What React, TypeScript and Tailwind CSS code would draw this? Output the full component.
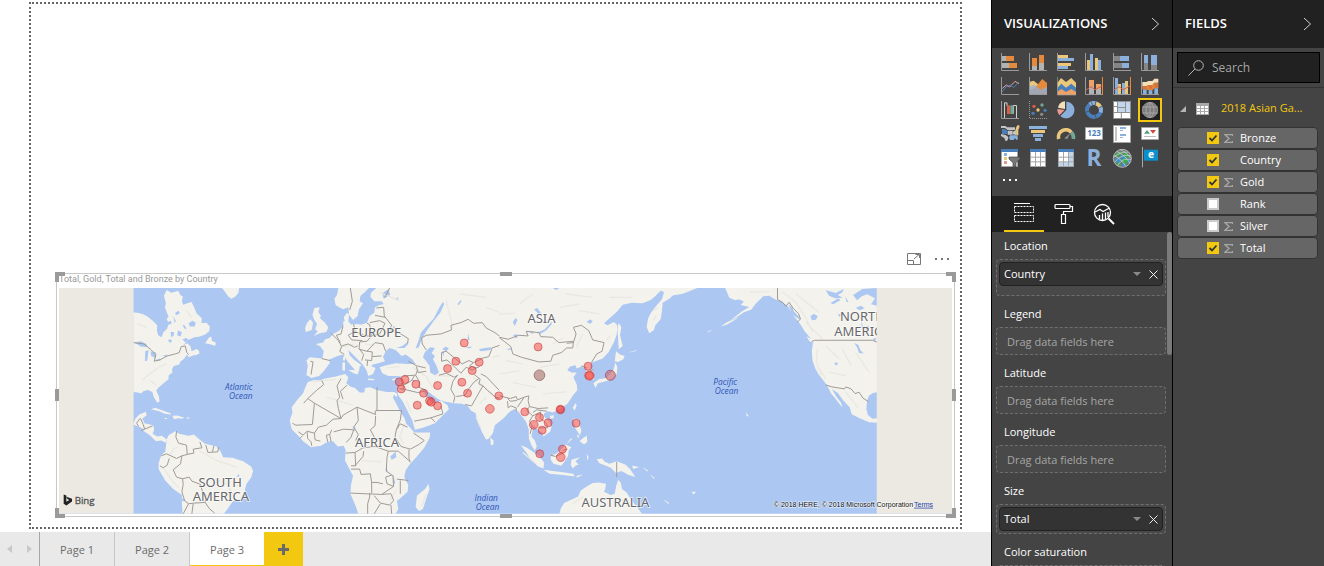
import { useState, type ReactNode } from "react"
import clsx from "clsx"

const ORANGE = "#e58a3c"
const BLUE = "#8cb0dc"
const DEEP = "#4a7ebb"
const SAND = "#ebc77c"
const GRAY = "#b3b3b3"

const Axis = () => (
  <path d="M1.5 0V52.5H54" fill="none" stroke="#9a9a9a" strokeWidth="3" />
)

const visuals: { name: string; icon: ReactNode }[] = [
  {
    name: "Stacked bar chart",
    icon: (
      <>
        <path d="M3 9h12v15H3zM3 30h21v15H3z" fill={GRAY} />
        <path d="M15 9h24v15H15zM24 30h24v15H24z" fill={ORANGE} />
        <Axis />
      </>
    ),
  },
  {
    name: "Stacked column chart",
    icon: (
      <>
        <path d="M9 39h15v12H9zM30 30h15v21H30z" fill={GRAY} />
        <path d="M9 15h15v24H9zM30 6h15v24H30z" fill={ORANGE} />
        <Axis />
      </>
    ),
  },
  {
    name: "Clustered bar chart",
    icon: (
      <>
        <path d="M3 6h30v9H3zM3 30h39v9H3z" fill={SAND} />
        <path d="M3 15h48v9H3zM3 39h30v9H3z" fill={BLUE} />
        <Axis />
      </>
    ),
  },
  {
    name: "Clustered column chart",
    icon: (
      <>
        <path d="M6 21h9v30H6zM30 15h9v36h-9z" fill={SAND} />
        <path d="M15 3h9v48h-9zM39 21h9v30h-9z" fill={BLUE} />
        <Axis />
      </>
    ),
  },
  {
    name: "100% stacked bar chart",
    icon: (
      <>
        <path d="M3 9h18v15H3zM3 30h24v15H3z" fill="#858585" />
        <path d="M21 9h27v15H21zM27 30h21v15H27z" fill={BLUE} />
        <Axis />
      </>
    ),
  },
  {
    name: "100% stacked column chart",
    icon: (
      <>
        <path d="M9 30h12v21H9zM30 36h18v15H30z" fill="#858585" />
        <path d="M9 6h12v24H9zM30 6h18v30H30z" fill={BLUE} />
        <Axis />
      </>
    ),
  },
  {
    name: "Line chart",
    icon: (
      <>
        <path d="M4 34L16 24L26 30L42 13L54 20" fill="none" stroke="#e2a29a" strokeWidth="3" />
        <path d="M2 46L15 30L28 24L38 32L53 16" fill="none" stroke={DEEP} strokeWidth="3" />
        <Axis />
      </>
    ),
  },
  {
    name: "Area chart",
    icon: (
      <>
        <path d="M3 14L14 11L30 24L42 26L54 16V51H3z" fill={SAND} />
        <path d="M3 40L18 32L40 6L54 19V51H3z" fill={ORANGE} />
        <path d="M3 28L17 24L34 38L54 30V51H3z" fill={BLUE} opacity=".75" />
        <Axis />
      </>
    ),
  },
  {
    name: "Stacked area chart",
    icon: (
      <>
        <path d="M1 18L12 3L27 15L43 3L57 17V34H1z" fill={SAND} />
        <path d="M1 33L13 20L27 32L43 20L57 32V46H1z" fill={DEEP} />
        <path d="M1 44L13 36L27 45L43 36L57 45V54H1z" fill="#eda368" />
        <path d="M1.5 0V54H57" fill="none" stroke="#9a9a9a" strokeWidth="2" />
      </>
    ),
  },
  {
    name: "Line and stacked column chart",
    icon: (
      <>
        <path d="M12 30h15v21H12zM33 36h15v15H33z" fill={GRAY} />
        <path d="M12 9h15v21H12zM33 21h15v15H33z" fill="#eda368" />
        <path d="M3 39L18 29L30 38L51 27" fill="none" stroke="#d95f49" strokeWidth="3" />
        <Axis />
        <path d="M52.5 0V54" stroke={ORANGE} strokeWidth="3" />
      </>
    ),
  },
  {
    name: "Line and clustered column chart",
    icon: (
      <>
        <path d="M6 3h9v48H6zM27 18h9v33h-9z" fill={BLUE} />
        <path d="M15 21h9v30h-9zM36 12h9v39h-9z" fill={SAND} />
        <path d="M3 39L18 29L30 38L51 27" fill="none" stroke="#d95f49" strokeWidth="3" />
        <Axis />
        <path d="M52.5 0V54" stroke={ORANGE} strokeWidth="3" />
      </>
    ),
  },
  {
    name: "Ribbon chart",
    icon: (
      <>
        <path d="M4 15h12l6-3h12l6-7h12v12H40l-6 8H22l-6 3H4z" fill="#f5dfb9" />
        <path d="M4 27h12l6-3h12l6-6h12v16H40l-6 6H22l-6-3H4z" fill={ORANGE} />
        <path d="M6 37h11v14H6zM23 40h11v11H23zM40 34h11v17H40z" fill={BLUE} />
        <path d="M6 27h11v10H6zM23 24h11v12H23zM40 18h11v14H40z" fill="#d9733a" />
        <Axis />
      </>
    ),
  },
  {
    name: "Waterfall chart",
    icon: (
      <>
        <path d="M10.500 51V5.500H18V15M37 38V13.500H46.500V51" fill="none" stroke="#d0d0d0" strokeWidth="3" />
        <path d="M18 13h9v26h-9z" fill="#d95f49" />
        <path d="M28 13h9v26h-9z" fill="#72a894" />
        <Axis />
      </>
    ),
  },
  {
    name: "Scatter chart",
    icon: (
      <>
        <circle cx="15" cy="16" r="5" fill="#d95f49" />
        <circle cx="39" cy="12" r="5" fill="#72a894" />
        <circle cx="27" cy="27" r="5" fill={SAND} />
        <circle cx="48" cy="28" r="5" fill={DEEP} />
        <circle cx="12" cy="37" r="5" fill={DEEP} />
        <circle cx="38" cy="40" r="5" fill="#8a8a8a" />
        <path d="M1.5 0V52.5H54" fill="none" stroke="#9a9a9a" strokeWidth="3" strokeDasharray="3 3" />
      </>
    ),
  },
  {
    name: "Pie chart",
    icon: (
      <>
        <path d="M28 27V2a25 25 0 1 1-18 43z" fill={BLUE} />
        <path d="M24 24V1A24 24 0 0 0 3 20z" fill="#f5dfb9" />
        <path d="M23 27L1 24a25 25 0 0 0 6 19z" fill="#ee9a8f" />
      </>
    ),
  },
  {
    name: "Donut chart",
    icon: (
      <g fill="none" strokeWidth="12">
        <circle cx="27" cy="27" r="21" stroke={DEEP} />
        <path d="M14 10A21 21 0 0 1 33 7" stroke={BLUE} />
        <path d="M33 7A21 21 0 0 1 46 18" stroke={SAND} />
        <path d="M46 18A21 21 0 0 1 47 34" stroke={BLUE} />
        <path d="M18 2l6 13M33 0l-3 13M55 14l-13 6M0 34l12-3M34 54l-3-12" stroke="#444" strokeWidth="2" />
      </g>
    ),
  },
  {
    name: "Treemap",
    icon: (
      <>
        <path d="M0 1h54v51H0z" fill="#fff" />
        <path d="M15 3h21v15H15zM39 3h12v29H39zM15 21h21v12H15z" fill="#c2d6ec" />
        <path d="M1.500 1.500h51v51h-51zM13.500 1V34M1 34.500h52M14 19.500h23M25 34v17M37.500 1v33M1 16.500h12" fill="none" stroke="#8f8f8f" strokeWidth="3" />
      </>
    ),
  },
  {
    name: "Map",
    icon: (
      <>
        <circle cx="27" cy="27" r="23" fill="#7c7c7c" stroke="#8f8f8f" strokeWidth="3" />
        <path d="M4 18h46M4 36h46M27 3v48M27 3c-16 14-16 34 0 48M27 3c16 14 16 34 0 48" fill="none" stroke="#a5a5a5" strokeWidth="3" />
      </>
    ),
  },
  {
    name: "Filled map",
    icon: (
      <>
        <path d="M0 3h14l4 4h24v8H20L12 9H0zM20 17h15v12H20zM0 27l14 3 8 6-2 10-6 3-4-10-10-6zM36 20l8-4 6 8-6 6-8-2z" fill="#c4c4c4" />
        <path d="M3 12h8l8 5v10H3z" fill={DEEP} />
        <path d="M27 31h22l2 12-5 2-4-6-4 6H28l-4-5z" fill={BLUE} />
        <path d="M46 6l3-5h6v8l-3 4v18h-6V18l-4 2z" fill={SAND} />
      </>
    ),
  },
  {
    name: "Funnel",
    icon: (
      <>
        <path d="M0 3h54v9H0z" fill={BLUE} />
        <path d="M6 15h42v9H6z" fill={SAND} />
        <path d="M12 27h30v9H12zM18 39h18v9H18z" fill={BLUE} />
      </>
    ),
  },
  {
    name: "Gauge",
    icon: (
      <>
        <path d="M5 42A22 22 0 0 1 43 22" fill="none" stroke={SAND} strokeWidth="11" />
        <path d="M43 22A22 22 0 0 1 49 42" fill="none" stroke="#72a894" strokeWidth="11" />
        <path d="M22 40L40 24L31 43z" fill="#8a8a8a" />
      </>
    ),
  },
  {
    name: "Card",
    icon: (
      <>
        <path d="M1.500 7.500h51v36H1.500z" fill="#fff" stroke="#a5a5a5" strokeWidth="3" />
        <text x="27" y="34" textAnchor="middle" fontSize="24" fontWeight="700" fontFamily="Open Sans" fill={DEEP}>123</text>
      </>
    ),
  },
  {
    name: "Multi-row card",
    icon: (
      <>
        <path d="M1.500 1.500h51v51H1.500z" fill="#fff" stroke="#a5a5a5" strokeWidth="3" />
        <path d="M6 6h6v42H6z" fill="#c4c4c4" />
        <path d="M21 6h18v6H21zM21 27h18v6H21z" fill={BLUE} />
        <path d="M21 15h9v3h-9zM21 36h9v3h-9z" fill="#9fb6d0" />
      </>
    ),
  },
  {
    name: "KPI",
    icon: (
      <>
        <path d="M1.500 7.500h51v36H1.500z" fill="#fff" stroke="#a5a5a5" strokeWidth="3" />
        <path d="M9 26L18 15L27 26z" fill="#5c9a82" />
        <path d="M27 15h18L36 26z" fill="#d1493b" />
        <path d="M9 34.500h36" stroke="#bdbdbd" strokeWidth="3" />
      </>
    ),
  },
  {
    name: "Slicer",
    icon: (
      <>
        <path d="M1.500 3h48v49.500h-48z" fill="#fff" stroke="#a5a5a5" strokeWidth="3" />
        <path d="M0 0h51v9H0z" fill={DEEP} />
        <path d="M9 12h9v9H9z" fill={BLUE} />
        <path d="M9 24h9v9H9z" fill={SAND} />
        <path d="M9 36h9v9H9z" fill="#e29a8c" />
        <path d="M24 24h33v6L45 41v12h-9V41L24 30z" fill="#777" stroke="#444" strokeWidth="2" />
      </>
    ),
  },
  {
    name: "Table",
    icon: (
      <>
        <path d="M4.500 4.500h45v48h-45z" fill="#fff" />
        <path d="M4.500 9v43.500h45V9M4 24.500h46M4 38.500h46M19.500 9v43M34.500 9v43" fill="none" stroke="#a5a5a5" strokeWidth="3" />
        <path d="M3 0h48v9H3z" fill={DEEP} />
      </>
    ),
  },
  {
    name: "Matrix",
    icon: (
      <>
        <path d="M4.500 4.500h45v48h-45z" fill="#fff" />
        <path d="M36 9h14v43H36zM4 39h46v13H4z" fill="#c2d6ec" />
        <path d="M4.500 9v43.500h45V9M4 24.500h46M4 38.500h46M19.500 9v43M34.500 9v43" fill="none" stroke="#a5a5a5" strokeWidth="3" />
        <path d="M3 0h48v9H3z" fill={DEEP} />
      </>
    ),
  },
  {
    name: "R script visual",
    icon: (
      <text x="27" y="52" textAnchor="middle" fontSize="68" fontWeight="700" fontFamily="Open Sans" fill={BLUE}>R</text>
    ),
  },
  {
    name: "ArcGIS Maps",
    icon: (
      <>
        <circle cx="28" cy="28" r="27" fill="#6e7a7a" stroke="#b5b5b5" strokeWidth="3" />
        <path d="M6 18l16-12 6 5-18 16zM32 10l12 4 6 10-6 4-14-8zM24 30l10-4 12 8-6 12-14-6zM8 38l8-3 8 14-6 2z" fill="#3ea84f" />
        <path d="M4 30l14-4 8 8-8 8-8-4zM24 18l16 8-6 6-12-6zM28 42l12 4-6 7-8-2zM46 32l6-4-2 12-6 4z" fill="#3b8fd0" />
        <path d="M3 24C20 10 36 8 46 10M5 40C18 22 36 16 52 20M14 50C24 32 38 28 54 32M12 8c16 6 32 22 38 34M4 20c14 6 28 20 34 32M22 2c14 6 26 16 31 26" fill="none" stroke="#d8dcdc" strokeWidth="2" />
      </>
    ),
  },
  {
    name: "Esri flag",
    icon: (
      <>
        <path d="M4.500 -6V55" stroke="#a9a9a9" strokeWidth="3" />
        <path d="M9 2h42v33H9z" fill="#0a90cc" />
        <text x="30" y="28" textAnchor="middle" fontSize="31" fontWeight="700" fontFamily="Open Sans" fill="#fff">e</text>
      </>
    ),
  },
]

const wells = [
  { label: "Location", value: "Country", tall: true },
  { label: "Legend" },
  { label: "Latitude" },
  { label: "Longitude" },
  { label: "Size", value: "Total" },
  { label: "Color saturation" },
]

const initialFields = [
  { name: "Bronze", checked: true, sum: true },
  { name: "Country", checked: true, sum: false },
  { name: "Gold", checked: true, sum: true },
  { name: "Rank", checked: false, sum: false },
  { name: "Silver", checked: false, sum: true },
  { name: "Total", checked: true, sum: true },
]

const bubbles = [
  [1244, 237], [1219, 292], [1194, 314], [1289, 295], [1268, 320], [1164, 365],
  [1237, 355], [1254, 388], [1049, 354], [1066, 347], [1055, 375], [1099, 361],
  [1122, 388], [1103, 424], [1140, 411], [1145, 415], [1164, 426], [1321, 435, 13],
  [1348, 396], [1466, 249], [1616, 307], [1620, 335, 14], [1620, 335, 12],
  [1426, 444], [1470, 461], [1453, 483, 13], [1496, 477], [1478, 499], [1533, 437, 13],
  [1533, 437, 11], [1580, 478], [1471, 570], [1539, 556], [1534, 580, 13],
]

const mapLabels = [
  { x: 980, y: 220, text: "EUROPE" },
  { x: 982, y: 551, text: "AFRICA" },
  { x: 1476, y: 177, text: "ASIA" },
  { x: 1698, y: 729, text: "AUSTRALIA" },
  { x: 511, y: 669, text: "SOUTH" },
  { x: 513, y: 712, text: "AMERICA" },
  { x: 2440, y: 172, text: "NORTH" },
  { x: 2440, y: 216, text: "AMERICA" },
]

const seaLabels = [
  { x: 567, y: 377, text: "Atlantic" },
  { x: 573, y: 405, text: "Ocean" },
  { x: 2028, y: 362, text: "Pacific" },
  { x: 2032, y: 391, text: "Ocean" },
  { x: 1310, y: 711, text: "Indian" },
  { x: 1314, y: 740, text: "Ocean" },
]

const LAND = "#f3f2ed"
const SEA = "#abc7f2"
const BORDER = "#a09b96"
const RELIEF = "#e9e8e2"

const WorldMap = () => (
  <svg viewBox="27 72 2682 678" className="block w-full" role="img" aria-label="World map">
    <path d="M27 72H2709V750H27z" fill={SEA} />

    {/* Atlantic side of the Americas */}
    <g>
      <path
        fill={LAND}
        d="M250 145L266 147L280 151L296 160L310 172L322 184L321 200L325 214L335 220L340 206L352 194L356 178L350 165L356 158L345 130L348 118L342 95L350 78L365 86L385 80L391 92L399 98L396 112L400 122L412 118L425 114L432 128L440 148L456 163L455 178L470 176L480 188L478 202L466 212L450 218L434 220L415 228L400 244L412 238L422 247L425 262L440 255L449 262L432 274L416 280L412 272L402 285L392 293L388 302L372 306L366 316L368 326L356 335L356 346L342 357L326 371L319 380L327 398L329 413L322 417L312 400L307 384L294 378L280 382L274 389L264 386L250 384z
        M466 238L476 222L484 218L487 232L498 236L496 246L484 242z
        M430 270L446 263L450 268L436 275z
        M250 482L256 465L268 452L288 444L290 455L277 464L284 478L310 484L313 498L308 510L322 518L336 516L350 526L347 537L334 530L318 532L300 514L284 504L274 492z
        M303 436L316 432L338 440L362 448L364 452L344 450L328 442z
        M368 456L382 455L402 461L399 465L385 463L372 466z M410 461l8 0v4h-8z M343 462l9 1v3l-8-1z
        M348 548L350 528L356 514L376 502L388 510L416 516L432 512L450 528L466 540L500 548L512 562L520 580L548 582L580 592L604 608L610 622L604 642L590 660L584 684L574 704L548 714L536 732L522 750H398L396 720L396 694L370 676L346 650L326 616L326 598L334 574L346 564z
        M516 72L526 84L534 96L544 104L556 98L566 86L568 72z"
      />
      <path
        fill={SEA}
        d="M254 236L272 232L290 240L292 250L272 248z M286 262L296 258L292 290L285 292z M302 262L318 266L316 282L304 276z M312 290L330 284L332 290z M336 276L352 272L352 278z
        M350 176L362 170L366 178L354 184z M416 178L428 170L438 176L434 188L420 188z M376 146l10-6 4 8-12 6z M362 204l10 0v10l-8 6z M384 200l12 4-4 14-10-4z M398 226l12-4 6 6-10 8z M356 226l10 2-2 8-8-2z M402 182l8 12-4 2-7-10z M560 640l7-10 2 8z M396 704l10 4-2 6-8-4z M370 156l8 16-4 4z"
      />
      <g fill="none" stroke={RELIEF} strokeWidth="4">
        <path d="M275 350L300 330L330 308L350 300M262 180L290 190M362 570L372 554L384 550M344 618L366 650L386 672M448 560L500 590L560 610M480 640L530 660L556 700M425 160L410 140M300 350l20 14" />
      </g>
      <g fill="none" stroke={BORDER} strokeWidth="3" strokeLinejoin="round">
        <path d="M250 236L282 240L304 258L318 272L313 292L330 288L352 276L376 270L388 266L394 248L406 246L411 266L416 272" />
        <path d="M270 464L260 478L266 488M272 464L280 482L284 496L308 486M274 500L286 494M380 502L378 520L386 538L410 544L412 572L396 576L392 600L370 618L380 640L398 645L418 640" />
        <path d="M410 572L432 568L430 556L456 552L450 534M468 544L474 566L504 564L506 550M492 546L488 564M334 576L350 570L380 584L396 576M330 606L340 612L352 604L358 584" />
        <path d="M398 645L400 662L396 684L404 710L416 720L400 750M418 640L426 652L452 662L458 684L468 694L466 716L434 718L416 720M466 716L478 734L494 748M430 720L426 750" />
      </g>
    </g>

    {/* Europe, Africa and western Asia */}
    <g transform="translate(690 0)">
      <path
        fill={LAND}
        d="M84 354L104 348L118 350L136 344L168 338L196 330L206 340L200 358L212 368L226 372L240 386L254 386L256 372L272 370L290 378L322 384L344 384L354 390L350 400L343 392L340 402L350 420L360 440L374 462L380 480L392 492L404 506L452 506L450 522L434 552L410 580L390 602L378 620L374 640L386 664L384 684L364 702L352 712L356 736L348 750H236L226 722L212 690L214 664L220 636L206 610L196 590L198 560L192 546L174 548L160 532L144 534L124 546L94 550L70 532L54 514L36 496L30 470L38 446L36 430L54 406L70 388L76 372z
        M446 660L450 676L440 704L430 736L418 742L408 730L412 696L426 684L438 674z
        M80 334L84 304L80 290L90 280L128 284L132 262L122 248L108 240L130 236L136 226L150 222L160 210L176 202L188 190L196 174L192 160L202 146L208 152L206 172L214 182L226 180L246 182L262 176L270 156L284 146L286 130L298 124L312 120L306 112L284 112L272 98L274 86L290 72H720V446L704 434L688 446L674 462L646 484L640 508L628 524L620 528L608 506L594 474L588 448L574 440L564 426L546 420L522 418L492 412L476 406L462 396L440 380L430 378L442 400L454 414L466 420L484 410L504 424L508 436L490 454L466 478L430 492L406 498L398 470L386 446L370 414L356 394L354 380L362 356L366 338L346 336L326 336L308 328L300 310L320 304L348 298L384 300L408 300L398 286L378 272L366 276L348 258L330 252L318 262L310 280L316 292L296 298L280 302L274 306L288 312L280 330L266 336L260 318L248 300L236 288L216 268L206 258L210 274L224 288L246 304L240 308L238 322L226 318L206 296L190 272L174 276L150 286L150 298L132 322L118 336L94 342L86 336z
        M168 124L164 104L172 92L176 72H268L256 84L242 96L240 112L250 118L238 136L234 156L220 168L208 152L206 130L190 136z
        M104 132L120 130L116 144L124 156L120 162L134 174L146 190L140 204L120 208L102 216L114 202L106 196L112 180L104 168L98 152z
        M82 176L92 166L100 176L96 198L78 204L76 192z
        M206 318L238 318L234 332L222 328z M188 296l8 0v24l-8 0z M190 280l6-4v14l-6 0z M264 344l20 1v4l-19-1z M336 346l14-4-8 9z
        M632 520L642 530L642 542L634 544z M192 170l8 4-2 10-8-3z"
      />
      <path
        fill={SEA}
        d="M436 264L452 250L466 252L456 268L466 276L460 286L470 304L478 326L466 334L452 326L450 306L440 292L430 280z M350 252L368 246L384 234L386 240L374 252z
        M488 256l10-8 10 6-8 8z M488 262l3 16 3-14z M598 256L616 252L636 250L632 258L604 262z M566 208l4 22-6-2z M416 232L424 206L440 188L462 164L480 130L490 114L494 120L482 146L460 174L442 200L426 226L418 250L408 254z
        M332 578L348 564L350 580L336 588z M320 596l4 32-6-8z M340 630l7 28-5 4z M218 488l10 4-4 10z M308 88L326 76L332 92L312 104z M346 104l10-4-2 10z M340 186l8 4-6 6z M558 250l20-2-8 6z M392 346l14 4-2 6z M534 120l10-12 2 4-9 12z"
      />
      <g fill="none" stroke={RELIEF} strokeWidth="4">
        <path d="M100 354L130 350L170 346M180 250L200 246L226 240M256 240L284 244M320 312L360 308M400 310L440 338L460 372M470 336L510 336M374 480L360 520L372 540M580 340L640 390M640 280L700 262M660 300L710 310M620 400L600 420M300 86L360 110M500 110L520 190M540 90L620 100M620 130L700 160M350 680l-20 30M380 410l14 36M590 460l14 32M440 690l-14 38M246 590l60 4M140 400l80 24" />
      </g>
      <g fill="none" stroke={BORDER} strokeWidth="3" strokeLinejoin="round">
        <path d="M92 292L100 294L94 332M126 284L152 290M154 208L176 230L186 248L180 262L194 272M190 186L184 210L170 214L182 236M186 246L206 240L224 250L234 246M222 180L226 202L206 214L216 228L248 230M226 202L252 214L276 218M262 178L270 182L276 216L262 232L240 234L238 256L262 262L286 236L310 240L318 262M276 216L300 210L316 178L300 170L270 176M286 154L316 160M290 132L312 130L314 156L336 184L330 196L354 204L386 224L384 238M316 100L330 72M212 72L218 112L210 138M240 256L252 272L246 290M262 262L278 264L276 290L256 288M278 278L306 276M264 290L262 306" />
        <path d="M386 292L412 306L438 312M410 308L416 326L440 322M370 336L408 334L414 318M408 334L420 354L418 370L440 380M362 358L376 362L396 350L404 336M360 374L372 376L414 386L436 382M372 360L370 378M478 334L500 328L524 340L534 334M534 334L520 352L514 376L526 398L522 416M530 398L556 394L568 374L584 354L598 344M486 292L486 266L500 262L532 288L548 300L568 290L582 296L604 286M486 292L502 288L526 310L544 328M544 328L560 310L578 318L600 308M584 332L602 346L598 360L610 366L576 426L556 422M610 366L624 380L648 400L684 408L684 392M684 400L720 402M440 258L428 240L426 222L440 214L484 210L516 198L514 184L544 176L566 166L582 178L608 176L620 192L646 206L662 218L684 234L672 240L638 252L628 278L604 284M684 234L720 220M650 402L688 412M690 412L688 436L704 428M582 296L570 306L590 312M604 330L620 338L660 380M662 218L700 224" />
        <path d="M84 404L104 418L184 464L176 434L172 410L180 400L172 366L184 344M72 418L84 404L110 380L132 362L126 350M104 418L98 482L48 484L38 478M184 464L190 454L232 430L288 452L286 442L292 440V370M190 406L182 382L202 364M292 440H366M288 456L286 486L272 498L284 520L280 530M232 430L236 470L222 490L236 512L228 530M184 464L160 466L140 484L116 490L104 508L82 502L70 514L56 504M104 508L106 528L122 532M156 498L150 512L154 534M150 512L140 514L144 534M162 504L192 496L222 498L214 520L200 536M68 516L60 524M82 504L84 524L94 534L96 546M366 440L362 468L350 498L346 520L364 548L392 556L418 542L434 530L402 508M350 498L362 480L384 490M388 558V584L392 596M326 562H356L390 592M326 562L322 580L320 622L340 636L342 668L322 660L318 640L336 634M198 568L226 566L228 606L214 606M226 566L250 552L286 548L326 562M226 606L250 578L252 562M214 616L240 616L244 632L272 630L276 656H292L310 660M276 656V688M212 688L256 690L306 692M270 688V700L264 720V750M306 692L342 668M306 692L334 690L342 710L330 724L302 718L284 696M352 646L386 650M362 650V690M284 750L302 720M334 724L336 750M404 472L454 462L466 474M454 462L490 450L484 426" />
      </g>
    </g>

    {/* East Asia and Oceania */}
    <g transform="translate(1350 0)">
      <path
        fill={LAND}
        d="M0 72H594L574 80L548 90L522 94L510 104L490 116L488 140L484 166L468 184L464 198L450 208L442 190L446 164L454 148L472 124L488 106L494 84L484 80L466 98L454 108L430 118L398 116L370 122L352 144L334 160L314 178L324 184L344 174L354 184L352 212L344 234L328 264L310 284L288 292L276 296L272 310L282 326L284 346L264 350L258 332L262 316L246 308L232 314L228 304L212 308L204 318L216 326L232 326L222 340L232 362L234 378L220 396L204 420L184 434L160 446L146 442L134 448L132 456L150 474L156 490L152 504L132 518L128 506L112 496L104 486L100 494L96 518L106 530L112 548L106 560L96 544L88 524L88 498L80 474L66 456L50 434L30 442L0 460z
        M358 176L366 190L362 214L370 246L358 256L356 220L354 196z
        M350 262L362 272L376 276L372 286L356 294L346 292z M348 296L354 310L352 330L336 346L312 354L296 358L288 372L282 358L298 346L322 342L342 318z
        M228 418l4 6-6 16-6-8z M152 456l12-2-2 9-10 1z
        M222 464L238 466L240 482L246 500L242 514L228 494z M240 532L254 520L262 516L264 534L254 542L246 536z M232 512l8 4-4 8z M220 524l-20 18 14-18z
        M64 544L80 550L98 562L120 578L134 596L132 614L116 608L94 588L82 568z
        M132 618L160 622L196 626L222 630L226 638L190 634L150 630z
        M154 574L170 570L186 556L198 542L216 550L208 560L206 576L196 592L186 606L162 600L154 588z
        M216 588L242 580L228 592L238 602L228 606L220 614L214 604z M232 636l20-4-20 10z M262 570l6 10-4 10z
        M292 586L308 584L316 594L330 600L352 592L378 602L392 616L408 640L388 634L366 622L350 628L334 612L314 604L300 598z M398 606l22 4-18 6z
        M180 750L184 734L194 718L220 706L236 698L244 680L262 668L280 658L298 656L320 660L318 674L314 684L334 694L346 690L350 668L356 648L364 656L368 676L382 686L394 706L410 726L428 750z
        M430 610l16 10-3 3z M452 632l14 10-3 3z M576 684l14 0-6 8z M490 706l20 12-4 2z M680 74L694 92L716 106L740 112V72z M664 188l20-14 36-14-36 22z M624 202l16-4-12 6z M386 266l26-8-4 4z"
      />
      <path
        fill={SEA}
        d="M114 206L136 196L158 172L156 182L140 200L122 210z M40 174l8-12 6 6-8 18z M262 174l10-8 8 6-8 8z M104 136l10-4 12 18-6 4z M160 72l10 6 10-6z M40 214l14-4-2 14z M204 320l12-4 10 8z M90 206l10-4 2 8z M20 256l16-4-4 6z"
      />
      <g fill="none" stroke={RELIEF} strokeWidth="4">
        <path d="M0 150L50 148M60 120L100 90M180 130L240 120M240 140L300 150M200 90L280 100M330 100L400 100M120 310L180 300M0 330L60 320M40 356L110 370M130 390L200 384M20 290L70 300M160 240L190 222M230 250L250 210M320 230L334 214M460 140L478 130M220 720L250 700M370 706L396 736M70 566L110 600M460 170l12-16M80 424l6 30" />
      </g>
      <g fill="none" stroke={BORDER} strokeWidth="3" strokeLinejoin="round">
        <path d="M0 220L26 226L58 214L86 216L80 202L118 206L124 218L160 220L178 236L222 232L220 252L202 252L186 266L160 274L154 292L118 294L66 280L40 270L34 248L14 232M0 222L14 232M202 238L222 236L230 210L222 190L246 184L268 200L280 228L314 236L308 262L292 270L276 296" />
        <path d="M0 396L32 404L50 398L54 408L74 400L88 396L86 410L90 428L116 434L146 432M24 412L26 432L34 426L50 432L50 442M24 404L32 412L52 410M54 430L66 412L74 400M90 428L82 440L100 456L90 472L98 486L92 510M100 456L124 444L122 462L142 480L144 492L118 492M100 446L112 438L142 442M98 486L104 492M154 574L168 578L192 568M352 594V640M246 306L262 312M154 574L160 576M272 320L282 318M190 560L204 556" />
      </g>
    </g>

    {/* Pacific side of North America */}
    <g transform="translate(2040 -75)">
      <path
        fill={LAND}
        d="M-12 147L0 176L18 184L30 180L44 188L34 198L60 204L36 218L14 236L0 246L20 236L44 220L66 212L78 196L102 172L120 170L140 182L156 186L176 202L188 222L198 236L212 254L226 276L246 300L252 308L248 336L250 364L258 388L268 406L284 426L294 440L306 464L318 478L330 494L340 506L336 492L322 474L308 450L326 462L342 484L362 506L368 526L392 538L420 550L444 552V538L430 540L416 528L412 510L414 486L420 470L432 462L444 460V147z
        M232 292L246 300L254 312L240 306z M178 196l12 10 6 18-10-6z M50 520l8 10-5 4z"
      />
      <path
        fill={SEA}
        d="M290 154L320 162L344 150L340 160L326 168L340 176L318 178L300 170z M304 192l24-14 6 6-22 12z M244 232l10-8 12 8-6 10-12 2z M372 168L400 150L444 147V200L426 196L438 178L414 166L398 172L384 184z M380 206l16-6 10 8-14 6z M376 312L388 318L394 334L404 344L390 342L384 326z M316 372l8-2 2 7-8 2z M396 246l8 24-6-4z M406 268l14-8-6 14z M348 172l10 16-5 2z M326 226l10 0-5 8z M440 296v10l-10-4z M184 206l26 28 4 10-26-18z"
      />
      <g fill="none" stroke={RELIEF} strokeWidth="4">
        <path d="M160 160L200 190L226 230L250 280M230 250L280 300M264 330L262 370L276 410M290 320L330 360M340 330L366 380M300 400L350 410M350 460L390 510M60 160L120 158M200 165L270 220M380 340L420 400M270 390l20 30" />
      </g>
      <g fill="none" stroke={BORDER} strokeWidth="3" strokeLinejoin="round">
        <path d="M145 147V182L160 190L170 202L180 190L192 208L208 224L214 240L204 250M256 304H430L444 310M290 438L308 444L346 450L350 444L366 450L378 464L390 460L402 478L418 488M248 308L256 304" />
      </g>
    </g>

    <g fontFamily="'Noto Sans', 'Open Sans', sans-serif" fontSize="39" fill="#66676a" textAnchor="middle" stroke="#fff" strokeOpacity=".7" strokeWidth="5" paintOrder="stroke">
      {mapLabels.map((l) => (
        <text key={l.text + l.x} x={l.x} y={l.y}>{l.text}</text>
      ))}
    </g>
    <g fontFamily="'Open Sans', 'Noto Sans', sans-serif" fontSize="25" fontStyle="italic" fill="#3155b5" textAnchor="middle">
      {seaLabels.map((l) => (
        <text key={l.text + l.x} x={l.x} y={l.y}>{l.text}</text>
      ))}
    </g>

    <g fill="#f5433f" fillOpacity=".5" stroke="#c63335" strokeOpacity=".55" strokeWidth="3">
      {bubbles.map(([x, y, r = 12], i) => (
        <circle key={i} cx={x} cy={y} r={r} />
      ))}
    </g>
    <circle cx="1470" cy="334" r="16" fill="#a86f6a" fillOpacity=".6" stroke="#8d5c58" strokeOpacity=".7" strokeWidth="3" />
    <circle cx="1683" cy="334" r="15" fill="#c9606a" fillOpacity=".6" stroke="#a04a4c" strokeOpacity=".7" strokeWidth="3" />

    <path d="M27 72H251V750H27zM2483 72H2709V750H2483z" fill="#ece9e2" />

    <path d="M41 692L49 695V714L58 709L52 706L49 699L66 705V713L49 725L41 720z" fill="#222" />
    <text x="74" y="721" fontSize="29" fontFamily="'Open Sans', sans-serif" fill="#555" stroke="#555">Bing</text>
    <text x="2174" y="729" fontSize="21" fontFamily="'Liberation Sans', sans-serif" fill="#111" stroke="#fff" strokeWidth="4" strokeOpacity=".6" paintOrder="stroke">
      © 2018 HERE, © 2018 Microsoft Corporation
    </text>
    <a href="#terms">
      <text x="2595" y="729" fontSize="21" fontFamily="'Liberation Sans', sans-serif" fill="#1c3fa8" textDecoration="underline">Terms</text>
    </a>
  </svg>
)

const Handles = () => (
  <>
    <i className="absolute -left-0.5 -top-0.5 size-2.5 border-l-4 border-t-4 border-[#9a9a9a]" />
    <i className="absolute -right-0.5 -top-0.5 size-2.5 border-r-4 border-t-4 border-[#9a9a9a]" />
    <i className="absolute -bottom-0.5 -left-0.5 size-2.5 border-b-4 border-l-4 border-[#9a9a9a]" />
    <i className="absolute -bottom-0.5 -right-0.5 size-2.5 border-b-4 border-r-4 border-[#9a9a9a]" />
    <i className="absolute -top-0.5 left-1/2 h-1 w-3 -translate-x-1/2 bg-[#9a9a9a]" />
    <i className="absolute -bottom-0.5 left-1/2 h-1 w-3 -translate-x-1/2 bg-[#9a9a9a]" />
    <i className="absolute -left-0.5 top-1/2 h-3 w-1 -translate-y-1/2 bg-[#9a9a9a]" />
    <i className="absolute -right-0.5 top-1/2 h-3 w-1 -translate-y-1/2 bg-[#9a9a9a]" />
  </>
)

const PanelHeader = ({ title }: { title: string }) => (
  <header className="flex h-12 shrink-0 items-center justify-between bg-[#212121] px-3">
    <h2 className="text-[13px] font-semibold text-white">{title}</h2>
    <button aria-label={`Collapse ${title}`}>
      <svg viewBox="0 0 9 14" className="h-3.5 w-[9px]" fill="none" stroke="#d5d5d5">
        <path d="M1 1L7.5 7L1 13" />
      </svg>
    </button>
  </header>
)

const Well = ({ label, value, tall }: { label: string; value?: string; tall?: boolean }) => (
  <section>
    <h3 className="h-[27px] pl-2 text-[11px] leading-7 text-white">{label}</h3>
    <div
      className={clsx(
        "rounded-sm border border-dashed border-[#6e6e6e] bg-[#494949]",
        tall ? "h-[37px]" : value ? "h-[30px]" : "h-7",
        value ? "p-0.5" : "px-2.5"
      )}
    >
      {value ? (
        <div className="flex h-6 items-center rounded-sm border border-[#212121] bg-[#333] px-1 text-[11px] text-white">
          <span className="flex-1">{value}</span>
          <button aria-label={`${value} options`} className="mr-2">
            <svg viewBox="0 0 8 4" className="h-1 w-2" fill="#8a8a8a">
              <path d="M0 0h8L4 4z" />
            </svg>
          </button>
          <button aria-label={`Remove ${value}`}>
            <svg viewBox="0 0 9 9" className="size-[9px]" stroke="#f0f0f0">
              <path d="M.5 .5l8 8M8.5 .5l-8 8" />
            </svg>
          </button>
        </div>
      ) : (
        <p className="text-[11px] leading-7 text-[#a6a6a6]">Drag data fields here</p>
      )}
    </div>
  </section>
)

const VisualizationsPanel = () => {
  const [selected, setSelected] = useState("Map")

  return (
    <aside className="flex w-[181px] shrink-0 flex-col overflow-hidden border-l border-black bg-[#444]">
      <PanelHeader title="VISUALIZATIONS" />
      <div className="flex flex-wrap gap-x-1.5 gap-y-0.5 pl-[7px] pt-[3px]">
        {visuals.map((v) => (
          <button
            key={v.name}
            aria-label={v.name}
            onClick={() => setSelected(v.name)}
            className={clsx(
              "flex size-[22px] items-center justify-center",
              selected === v.name && "bg-[#212121] outline-2 -outline-offset-1 outline-[#f2c811]"
            )}
          >
            <svg viewBox="0 0 54 54" className="size-[18px] overflow-visible">{v.icon}</svg>
          </button>
        ))}
      </div>
      <button aria-label="More visuals" className="flex h-[27px] shrink-0 items-center gap-1 pb-1.5 pl-[11px]">
        <i className="size-0.5 bg-white" />
        <i className="size-0.5 bg-white" />
        <i className="size-0.5 bg-white" />
      </button>

      <div className="flex h-9 shrink-0 bg-[#212121] pl-3">
        <button aria-label="Fields" className="flex w-10 items-center justify-center border-b-2 border-[#f2c811]">
          <svg viewBox="0 0 20 20" className="size-5" fill="none" stroke="#fff">
            <path d="M0 .5H16" />
            <path d="M.5 3.5H19.5V9.5H.5zM.5 12.5H19.5V18.5H.5V12.5" strokeDasharray="2 1" />
          </svg>
        </button>
        <button aria-label="Format" className="flex w-10 items-center justify-center">
          <svg viewBox="0 0 20 22" className="h-[22px] w-5" fill="none" stroke="#fff" strokeWidth="1.2">
            <rect x="1" y="1.5" width="15" height="4" rx="1" />
            <path d="M16 3.5H18.5V8.5H9.5V11.5M7.5 11.5h4v9h-4z" />
          </svg>
        </button>
        <button aria-label="Analytics" className="flex w-10 items-center justify-center">
          <svg viewBox="0 0 22 22" className="size-[22px]" fill="none" stroke="#fff" strokeWidth="1.3">
            <circle cx="9.5" cy="9.5" r="8" />
            <path d="M15.5 15.5L21 21" strokeWidth="2" />
            <path d="M2 9L7 6.5L10 8.5L16.5 5M6.5 16V12M9.5 17V10.5M12.5 16V9.5M15 14V9" />
          </svg>
        </button>
      </div>

      <div className="flex min-h-0 flex-1">
        <div className="flex flex-1 flex-col gap-1 overflow-hidden pl-1 pr-px">
          {wells.map((w) => (
            <Well key={w.label} {...w} />
          ))}
        </div>
        <div className="h-[123px] w-[5px] rounded-full bg-[#7a7a7a]" />
      </div>
    </aside>
  )
}

const FieldsPanel = () => {
  const [fields, setFields] = useState(initialFields)

  const toggle = (name: string) =>
    setFields(fields.map((f) => (f.name === name ? { ...f, checked: !f.checked } : f)))

  return (
    <aside className="flex w-[152px] shrink-0 flex-col overflow-hidden border-l border-black bg-[#444]">
      <PanelHeader title="FIELDS" />
      <div className="border-b border-[#333] p-1">
        <label className="flex h-[31px] items-center gap-2 border border-black bg-[#212121] pl-2.5">
          <svg viewBox="0 0 16 16" className="size-4 shrink-0" fill="none" stroke="#b5b5b5">
            <circle cx="10.5" cy="5.5" r="4.8" />
            <path d="M7 9L.5 15.5" />
          </svg>
          <input
            type="text"
            aria-label="Search"
            placeholder="Search"
            className="w-full min-w-0 bg-transparent text-xs text-white outline-none placeholder:text-[#a6a6a6]"
          />
        </label>
      </div>

      <button className="flex h-[39px] shrink-0 items-center pl-[7px] pt-0.5 text-left text-[11px] text-[#f2c811]">
        <svg viewBox="0 0 6 6" className="size-1.5" fill="#b5b5b5">
          <path d="M6 0V6H0z" />
        </svg>
        <svg viewBox="0 0 13 12" className="ml-2.5 h-3 w-[13px]">
          <path d="M0 0h13v12H0z" fill="#a9a9a9" />
          <path d="M1 3h3v2H1zM5 3h3v2H5zM9 3h3v2H9zM1 6h3v2H1zM5 6h3v2H5zM9 6h3v2H9zM1 9h3v2H1zM5 9h3v2H5zM9 9h3v2H9z" fill="#fff" />
        </svg>
        <span className="ml-3">2018 Asian Ga...</span>
      </button>

      <ul className="pl-1 pr-1.5">
        {fields.map((f) => (
          <li key={f.name} className="h-[22px] rounded-sm border border-[#333] bg-[#666]">
            <label className="flex h-full items-center pl-[29px] text-[11px] text-white">
              <span className="relative size-3 shrink-0">
                <input
                  type="checkbox"
                  checked={f.checked}
                  onChange={() => toggle(f.name)}
                  className="block size-3 appearance-none border-2 border-[#cbcbcb] bg-white checked:border-[#f2c811] checked:bg-[#f2c811]"
                />
                {f.checked && (
                  <svg viewBox="0 0 12 12" className="pointer-events-none absolute inset-0 size-3" fill="none" stroke="#333" strokeWidth="1.8">
                    <path d="M2.5 6L5 8.5L9.5 3.5" />
                  </svg>
                )}
              </span>
              <span className="ml-1 w-[17px]">
                {f.sum && (
                  <svg viewBox="0 0 9 9" className="ml-px size-[9px]" fill="none" stroke="#a6a6a6" strokeWidth="1.4">
                    <path d="M8.5 2V.6H.8L5 4.5L.8 8.4H8.5V7" />
                  </svg>
                )}
              </span>
              {f.name}
            </label>
          </li>
        ))}
      </ul>
    </aside>
  )
}

const PageTabs = () => {
  const [active, setActive] = useState("Page 3")

  return (
    <nav className="flex h-[34px] shrink-0 bg-[#e9e9e9] text-[11px] text-[#6b6b6b]">
      <div className="flex w-10 items-center justify-between border-r border-[#a6a6a6] px-[7px]">
        <button aria-label="Previous page">
          <svg viewBox="0 0 5 8" className="h-2 w-[5px]" fill="#c8c8c8">
            <path d="M5 0V8L0 4z" />
          </svg>
        </button>
        <button aria-label="Next page">
          <svg viewBox="0 0 5 8" className="h-2 w-[5px]" fill="#c8c8c8">
            <path d="M0 0V8L5 4z" />
          </svg>
        </button>
      </div>
      {["Page 1", "Page 2", "Page 3"].map((page) => (
        <button
          key={page}
          onClick={() => setActive(page)}
          className={clsx(
            "px-5 pt-0.5",
            active === page
              ? "border-y border-t-white border-b-[#f2c811] bg-white"
              : "border-r border-[#c8c8c8]"
          )}
        >
          {page}
        </button>
      ))}
      <button aria-label="New page" className="flex w-[39px] items-center justify-center bg-[#f2c811]">
        <svg viewBox="0 0 11 11" className="size-[11px]" stroke="#6b6b6b" strokeWidth="3">
          <path d="M5.5 0V11M0 5.5H11" />
        </svg>
      </button>
    </nav>
  )
}

const App = () => (
  <div className="flex h-screen overflow-hidden bg-white font-['Open_Sans','Noto_Sans',sans-serif]">
    <main className="flex min-w-0 flex-1 flex-col">
      <div className="flex min-h-0 flex-1 flex-col px-[29px] pb-[3px] pt-0.5">
        <div className="flex flex-1 flex-col justify-end border-2 border-dotted border-[#666] pb-2.5 pl-[25px] pr-[5px]">
          <div className="mb-2 flex items-center justify-end gap-3.5 pr-1.5">
            <button aria-label="Focus mode">
              <svg viewBox="0 0 14 12" className="h-3 w-3.5" fill="none" stroke="#777">
                <path d="M.5 .5H13.5V11.5H.5zM.5 7.5H6.5V11.5M7 6L12 1.5M8.5 1.5H12.5V5" />
              </svg>
            </button>
            <button aria-label="More options" className="flex gap-1">
              <i className="size-0.5 bg-[#777]" />
              <i className="size-0.5 bg-[#777]" />
              <i className="size-0.5 bg-[#777]" />
            </button>
          </div>
          <figure className="relative border border-[#c8c8c8] px-0.5 pb-0.5">
            <figcaption className="h-3.5 font-[Roboto] text-[9px] leading-[11px] text-[#999]">
              Total, Gold, Total and Bronze by Country
            </figcaption>
            <WorldMap />
            <Handles />
          </figure>
        </div>
      </div>
      <PageTabs />
    </main>
    <VisualizationsPanel />
    <FieldsPanel />
  </div>
)

export default App
